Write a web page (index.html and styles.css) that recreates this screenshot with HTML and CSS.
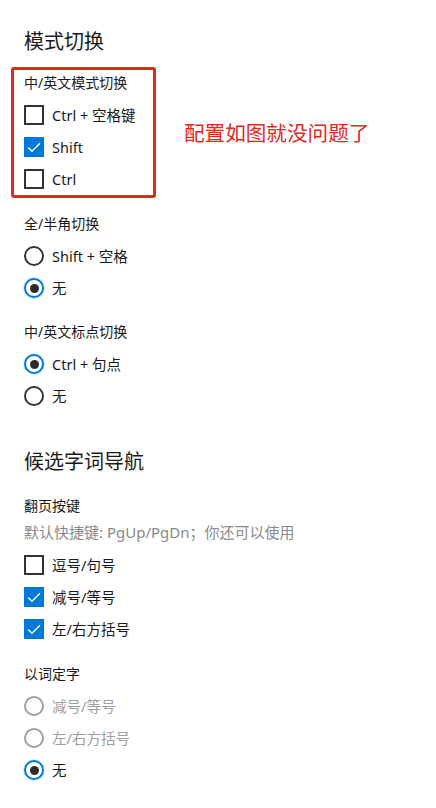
FILE: index.html
```html
<!DOCTYPE html>
<html lang="zh-CN">
<head>
<meta charset="utf-8">
<title>输入法设置</title>
<link rel="stylesheet" href="styles.css">
</head>
<body>
<main class="page">
  <h2 class="section-title">模式切换</h2>

  <div class="annotated">
    <div class="highlight">
      <div class="group-label">中/英文模式切换</div>
      <div class="row"><span class="check"></span><span class="text">Ctrl + 空格键</span></div>
      <div class="row"><span class="check checked"><svg viewBox="0 0 20 20" width="20" height="20"><path d="M4.2 10.4 L8 14.2 L16 6.2" fill="none" stroke="#fff" stroke-width="1.4"/></svg></span><span class="text">Shift</span></div>
      <div class="row"><span class="check"></span><span class="text">Ctrl</span></div>
    </div>
    <div class="note">配置如图就没问题了</div>
  </div>

  <div class="group">
    <div class="group-label">全/半角切换</div>
    <div class="row"><span class="radio"></span><span class="text">Shift + 空格</span></div>
    <div class="row"><span class="radio selected"></span><span class="text">无</span></div>
  </div>

  <div class="group punct">
    <div class="group-label">中/英文标点切换</div>
    <div class="row"><span class="radio selected"></span><span class="text">Ctrl + 句点</span></div>
    <div class="row"><span class="radio"></span><span class="text">无</span></div>
  </div>

  <h2 class="section-title second">候选字词导航</h2>

  <div class="group first">
    <div class="group-label">翻页按键</div>
    <div class="desc">默认快捷键: PgUp/PgDn；你还可以使用</div>
    <div class="row"><span class="check"></span><span class="text">逗号/句号</span></div>
    <div class="row"><span class="check checked"><svg viewBox="0 0 20 20" width="20" height="20"><path d="M4.2 10.4 L8 14.2 L16 6.2" fill="none" stroke="#fff" stroke-width="1.4"/></svg></span><span class="text">减号/等号</span></div>
    <div class="row"><span class="check checked"><svg viewBox="0 0 20 20" width="20" height="20"><path d="M4.2 10.4 L8 14.2 L16 6.2" fill="none" stroke="#fff" stroke-width="1.4"/></svg></span><span class="text">左/右方括号</span></div>
  </div>

  <div class="group last">
    <div class="group-label">以词定字</div>
    <div class="row disabled"><span class="radio"></span><span class="text">减号/等号</span></div>
    <div class="row disabled"><span class="radio"></span><span class="text">左/右方括号</span></div>
    <div class="row"><span class="radio selected"></span><span class="text">无</span></div>
  </div>
</main>
</body>
</html>
```

FILE: styles.css
```css
html, body {
  margin: 0;
  padding: 0;
  background: #ffffff;
}

body {
  font-family: "Noto Sans", "Noto Sans CJK SC", sans-serif;
  color: #1a1a1a;
}

.page {
  padding: 28px 0 0 24px;
}

.section-title {
  margin: 0;
  font-size: 20px;
  font-weight: 400;
  line-height: 28px;
  color: #1a1a1a;
}

.section-title.second {
  margin-top: 36px;
}

.annotated {
  display: flex;
  align-items: center;
  margin-top: 11px;
  margin-left: -13px;
}

.highlight {
  width: 129px;
  padding: 3px 0 0 10px;
  border: 3px solid #e0281e;
  border-radius: 3px;
}

.note {
  margin-left: 28px;
  font-size: 20.6px;
  line-height: 28px;
  color: #e0281e;
}

.group {
  margin-top: 16px;
}

.group.punct {
  margin-top: 18px;
}

.group.first {
  margin-top: 20px;
}

.group.last {
  margin-top: 19px;
}

.group-label {
  font-size: 14px;
  line-height: 20px;
  margin-bottom: 6px;
  color: #1a1a1a;
}

.desc {
  font-size: 15px;
  line-height: 20px;
  margin-top: 0;
  margin-bottom: 7px;
  color: #8a8a8a;
}

.row {
  display: flex;
  align-items: center;
  height: 32px;
}

.text {
  margin-left: 8px;
  font-size: 14.5px;
  line-height: 20px;
  color: #1a1a1a;
}

.check {
  box-sizing: border-box;
  width: 20px;
  height: 20px;
  border: 2px solid #333333;
  flex: none;
  position: relative;
}

.check.checked {
  background: #0078d7;
  border-color: #0078d7;
}

.check.checked svg {
  position: absolute;
  left: -2px;
  top: -2px;
}

.radio {
  box-sizing: border-box;
  width: 20px;
  height: 20px;
  border: 2px solid #333333;
  border-radius: 50%;
  flex: none;
  display: flex;
  align-items: center;
  justify-content: center;
}

.radio.selected {
  border-color: #0078d7;
  box-shadow: 0 0 0 1px rgba(0, 120, 215, 0.15);
}

.radio.selected::after {
  content: "";
  width: 9px;
  height: 9px;
  border-radius: 50%;
  background: #2b2b2b;
}

.row.disabled .radio {
  border-color: #a0a0a0;
}

.row.disabled .text {
  color: #a0a0a0;
}
```
